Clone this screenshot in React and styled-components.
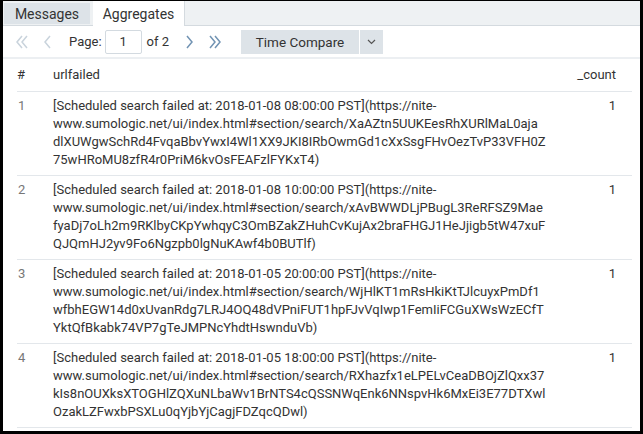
import React, { useState } from "react";
import styled, { createGlobalStyle } from "styled-components";

const rows = [
  {
    id: 1,
    lines: [
      "[Scheduled search failed at: 2018-01-08 08:00:00 PST](https://nite-",
      "www.sumologic.net/ui/index.html#section/search/XaAZtn5UUKEesRhXURlMaL0aja",
      "dlXUWgwSchRd4FvqaBbvYwxI4Wl1XX9JKI8IRbOwmGd1cXxSsgFHvOezTvP33VFH0Z",
      "75wHRoMU8zfR4r0PriM6kvOsFEAFzlFYKxT4)",
    ],
    count: 1,
  },
  {
    id: 2,
    lines: [
      "[Scheduled search failed at: 2018-01-08 10:00:00 PST](https://nite-",
      "www.sumologic.net/ui/index.html#section/search/xAvBWWDLjPBugL3ReRFSZ9Mae",
      "fyaDj7oLh2m9RKlbyCKpYwhqyC3OmBZakZHuhCvKujAx2braFHGJ1HeJjigb5tW47xuF",
      "QJQmHJ2yv9Fo6Ngzpb0lgNuKAwf4b0BUTlf)",
    ],
    count: 1,
  },
  {
    id: 3,
    lines: [
      "[Scheduled search failed at: 2018-01-05 20:00:00 PST](https://nite-",
      "www.sumologic.net/ui/index.html#section/search/WjHlKT1mRsHkiKtTJlcuyxPmDf1",
      "wfbhEGW14d0xUvanRdg7LRJ4OQ48dVPniFUT1hpFJvVqIwp1FemIiFCGuXWsWzECfT",
      "YktQfBkabk74VP7gTeJMPNcYhdtHswnduVb)",
    ],
    count: 1,
  },
  {
    id: 4,
    lines: [
      "[Scheduled search failed at: 2018-01-05 18:00:00 PST](https://nite-",
      "www.sumologic.net/ui/index.html#section/search/RXhazfx1eLPELvCeaDBOjZlQxx37",
      "kIs8nOUXksXTOGHlZQXuNLbaWv1BrNTS4cQSSNWqEnk6NNspvHk6MxEi3E77DTXwl",
      "OzakLZFwxbPSXLu0qYjbYjCagjFDZqcQDwl)",
    ],
    count: 1,
  },
];

const GlobalStyle = createGlobalStyle`
  html, body {
    margin: 0;
    padding: 0;
    background: #000000;
  }
  * {
    box-sizing: border-box;
  }
`;

const Chevron = ({ double, dir, color }) => {
  const first = dir === "left" ? "6,1 1,7 6,13" : "1,1 6,7 1,13";
  const second = dir === "left" ? "11,1 6,7 11,13" : "6,1 11,7 6,13";
  return (
    <svg width={double ? 12 : 7} height="14" viewBox={double ? "0 0 12 14" : "0 0 7 14"}>
      <polyline points={first} fill="none" stroke={color} strokeWidth="1.5" />
      {double && <polyline points={second} fill="none" stroke={color} strokeWidth="1.5" />}
    </svg>
  );
};

const App = () => {
  const [tab, setTab] = useState("Aggregates");
  const [page, setPage] = useState("1");

  return (
    <Frame>
      <GlobalStyle />
      <TabBar>
        {["Messages", "Aggregates"].map((t) => (
          <Tab key={t} $active={tab === t} onClick={() => setTab(t)}>
            {t}
          </Tab>
        ))}
      </TabBar>
      <Toolbar>
        <NavButton $ml={0}>
          <Chevron double dir="left" color="#c9d3dc" />
        </NavButton>
        <NavButton $ml={5}>
          <Chevron dir="left" color="#c9d3dc" />
        </NavButton>
        <PageLabel $ml={12}>Page:</PageLabel>
        <PageInput value={page} onChange={(e) => setPage(e.target.value)} />
        <PageLabel $ml={5}>of 2</PageLabel>
        <NavButton $ml={10}>
          <Chevron dir="right" color="#7193b3" />
        </NavButton>
        <NavButton $ml={6}>
          <Chevron double dir="right" color="#7193b3" />
        </NavButton>
        <SplitButton>
          <MainButton>Time Compare</MainButton>
          <CaretButton>
            <svg width="9" height="6" viewBox="0 0 9 6">
              <polyline points="1,1 4.5,4.5 8,1" fill="none" stroke="#555" strokeWidth="1.2" />
            </svg>
          </CaretButton>
        </SplitButton>
      </Toolbar>
      <Table>
        <colgroup>
          <col style={{ width: 36 }} />
          <col />
          <col style={{ width: 70 }} />
        </colgroup>
        <thead>
          <tr>
            <Th>#</Th>
            <Th>urlfailed</Th>
            <Th $align="right">_count</Th>
          </tr>
        </thead>
        <tbody>
          {rows.map((row) => (
            <tr key={row.id}>
              <IndexCell>{row.id}</IndexCell>
              <TextCell>
                {row.lines.map((l, i) => (
                  <Line key={i}>{l}</Line>
                ))}
              </TextCell>
              <CountCell>{row.count}</CountCell>
            </tr>
          ))}
        </tbody>
      </Table>
    </Frame>
  );
};

const Frame = styled.div`
  width: 643px;
  height: 434px;
  border-style: solid;
  border-color: #000000;
  border-width: 1px 3px 3px 3px;
  background: #ffffff;
  font-family: Roboto, "Liberation Sans", sans-serif;
  color: #333333;
  overflow: hidden;
`;

const TabBar = styled.div`
  display: flex;
  align-items: flex-end;
  height: 25px;
  padding-left: 1px;
  gap: 3px;
  background: #eef1f3;
  border-bottom: 1px solid #d4dadf;
`;

const Tab = styled.div`
  display: flex;
  align-items: center;
  justify-content: center;
  font-size: 14px;
  cursor: pointer;
  color: #333333;
  ${(p) =>
    p.$active
      ? `
    width: 92px;
    height: 25px;
    margin-bottom: -1px;
    background: #ffffff;
    border-right: 1px solid #d4dadf;
    padding-top: 1px;
  `
      : `
    width: 86px;
    height: 21px;
    margin-bottom: 1px;
    background: #dde3e8;
  `}
`;

const Toolbar = styled.div`
  display: flex;
  align-items: center;
  height: 33px;
  padding-left: 9px;
  border-bottom: 2px solid #eceff2;
`;

const NavButton = styled.span`
  display: flex;
  align-items: center;
  justify-content: center;
  width: 20px;
  margin-left: ${(p) => p.$ml}px;
  cursor: pointer;
`;

const PageLabel = styled.span`
  font-size: 13px;
  margin-left: ${(p) => p.$ml}px;
`;

const PageInput = styled.input`
  width: 37px;
  height: 24px;
  margin-left: 3px;
  border: 1px solid #d3dae0;
  border-radius: 2px;
  text-align: center;
  font-family: Roboto, "Liberation Sans", sans-serif;
  font-size: 13px;
  color: #333333;
  padding: 0;
`;

const SplitButton = styled.div`
  display: flex;
  gap: 1px;
  margin-left: 16px;
`;

const MainButton = styled.button`
  width: 118px;
  height: 24px;
  border: none;
  background: #dde3e8;
  font-family: Roboto, "Liberation Sans", sans-serif;
  font-size: 13.5px;
  color: #333333;
  padding: 0;
  cursor: pointer;
`;

const CaretButton = styled.button`
  width: 23px;
  height: 24px;
  border: none;
  background: #dde3e8;
  padding: 0;
  display: flex;
  align-items: center;
  justify-content: center;
  cursor: pointer;
`;

const Table = styled.table`
  width: 615px;
  margin-left: 14px;
  border-collapse: collapse;
  table-layout: fixed;
  font-size: 13px;
`;

const Th = styled.th`
  height: 32px;
  font-weight: normal;
  font-size: 13px;
  text-align: ${(p) => p.$align || "left"};
  padding: 0 ${(p) => (p.$align === "right" ? "16px" : "0")} 0 0;
  border-bottom: 1px solid #e3e7eb;
  color: #333333;
`;

const IndexCell = styled.td`
  vertical-align: top;
  padding-top: 5px;
  color: #777777;
  line-height: 18px;
  border-bottom: 1px solid #e3e7eb;
`;

const TextCell = styled.td`
  vertical-align: top;
  padding: 5px 0 6px;
  line-height: 18px;
  color: #333333;
  border-bottom: 1px solid #e3e7eb;
`;

const Line = styled.div`
  white-space: nowrap;
`;

const CountCell = styled.td`
  vertical-align: top;
  text-align: right;
  padding: 5px 16px 0 0;
  line-height: 18px;
  border-bottom: 1px solid #e3e7eb;
`;

export default App;
